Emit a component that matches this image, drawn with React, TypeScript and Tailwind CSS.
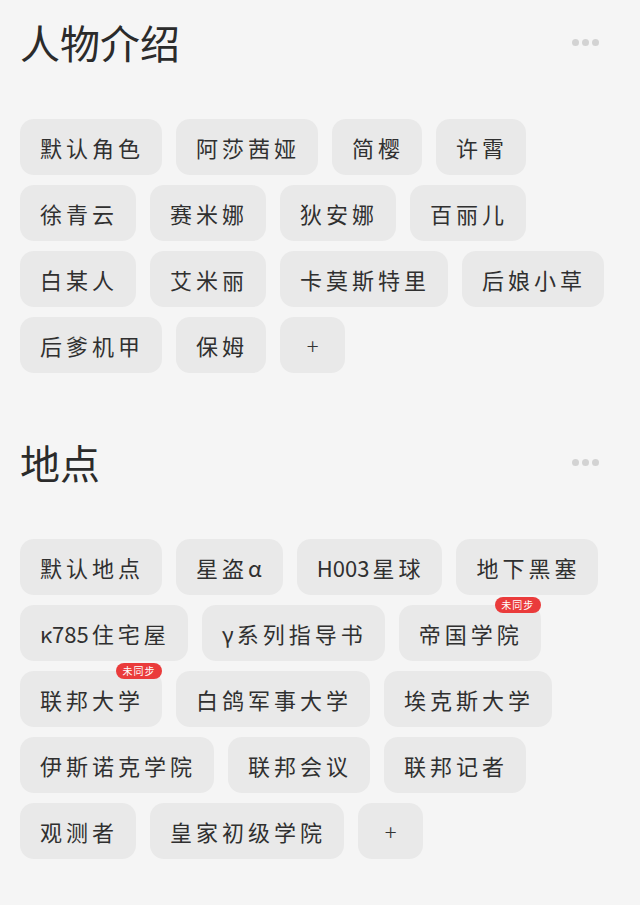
import { useState } from 'react';

interface Tag {
    name: string;
    unsynced?: boolean;
}

const characters: Tag[] = [
    { name: '默认角色' },
    { name: '阿莎茜娅' },
    { name: '简樱' },
    { name: '许霄' },
    { name: '徐青云' },
    { name: '赛米娜' },
    { name: '狄安娜' },
    { name: '百丽儿' },
    { name: '白某人' },
    { name: '艾米丽' },
    { name: '卡莫斯特里' },
    { name: '后娘小草' },
    { name: '后爹机甲' },
    { name: '保姆' },
];

const places: Tag[] = [
    { name: '默认地点' },
    { name: '星盗α' },
    { name: 'H003星球' },
    { name: '地下黑塞' },
    { name: 'κ785住宅屋' },
    { name: 'γ系列指导书' },
    { name: '帝国学院', unsynced: true },
    { name: '联邦大学', unsynced: true },
    { name: '白鸽军事大学' },
    { name: '埃克斯大学' },
    { name: '伊斯诺克学院' },
    { name: '联邦会议' },
    { name: '联邦记者' },
    { name: '观测者' },
    { name: '皇家初级学院' },
];

// Latin / greek runs are not letter-spaced like the CJK text
function TagLabel({ name }: { name: string }) {
    const parts = name.split(/([A-Za-z0-9α-ωΑ-Ω]+)/).filter(Boolean);

    return (
        <>
            {parts.map((part, i) =>
                /^[A-Za-z0-9α-ωΑ-Ω]+$/.test(part) ? (
                    <span key={i} className="mr-[3px] tracking-normal">
                        {part}
                    </span>
                ) : (
                    <span key={i}>{part}</span>
                ),
            )}
        </>
    );
}

function Section({ title, tags }: { title: string; tags: Tag[] }) {
    const [selected, setSelected] = useState<string | null>(null);

    return (
        <section>
            {/* Header */}
            <div className="flex h-[56px] items-center justify-between pr-[41px]">
                <h2 className="text-[40px] leading-[56px] font-normal text-[#2b2b2b]">
                    {title}
                </h2>
                <div className="flex gap-[3px]">
                    <span className="h-[7px] w-[7px] rounded-full bg-[#d3d3d3]" />
                    <span className="h-[7px] w-[7px] rounded-full bg-[#d3d3d3]" />
                    <span className="h-[7px] w-[7px] rounded-full bg-[#d3d3d3]" />
                </div>
            </div>

            {/* Tags */}
            <div className="mt-[49px] flex flex-wrap gap-x-[14px] gap-y-[10px] pr-[20px]">
                {tags.map((tag) => (
                    <button
                        key={tag.name}
                        onClick={() => setSelected(tag.name)}
                        className={
                            'relative flex h-[56px] items-center rounded-[14px] pr-[18px] pl-[20px] text-[22px] tracking-[4px] text-[#303030] ' +
                            (selected === tag.name ? 'bg-[#dedede]' : 'bg-[#e9e9e9]')
                        }
                    >
                        <TagLabel name={tag.name} />
                        {tag.unsynced && (
                            <span className="absolute -top-[8px] right-0 flex h-[16px] w-[46px] items-center justify-center rounded-full bg-[#ea3b3b] text-[10px] leading-none tracking-[1px] text-white">
                                未同步
                            </span>
                        )}
                    </button>
                ))}
                <button className="flex h-[56px] w-[65px] items-center justify-center rounded-[14px] bg-[#e9e9e9] text-[22px] font-light text-[#333333]">
                    +
                </button>
            </div>
        </section>
    );
}

export default function App() {
    return (
        <div
            className="min-h-[905px] bg-[#f5f5f5] pt-[14px] pl-[20px]"
            style={{ fontFamily: '"Noto Sans CJK SC", "Noto Sans", sans-serif' }}
        >
            <Section title="人物介绍" tags={characters} />
            <div className="h-[61px]" />
            <Section title="地点" tags={places} />
        </div>
    );
}
